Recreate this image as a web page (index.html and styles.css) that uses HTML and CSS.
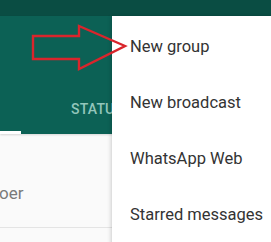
FILE: index.html
```html
<!DOCTYPE html>
<html>
<head>
<meta charset="utf-8">
<link rel="stylesheet" href="styles.css">
</head>
<body>
<div class="screen">
  <div class="statusbar"></div>
  <header class="appbar">
    <nav class="tabs">
      <div class="tab tab-active"></div>
      <div class="tab tab-status">STATUS</div>
    </nav>
  </header>
  <main class="content">
    <div class="row"><span class="row-text">oer</span></div>
    <div class="divider"></div>
  </main>
  <ul class="menu">
    <li class="menu-item">New group</li>
    <li class="menu-item">New broadcast</li>
    <li class="menu-item">WhatsApp Web</li>
    <li class="menu-item">Starred messages</li>
  </ul>
  <svg class="arrow" width="271" height="242" viewBox="0 0 271 242">
    <polygon points="33,36 79,36 79,26 125,46 79,69 79,59 33,59" fill="none" stroke="#d9252c" stroke-width="2.4" stroke-linejoin="miter"/>
  </svg>
</div>
</body>
</html>
```
FILE: styles.css
```css
html, body {
  margin: 0;
  padding: 0;
}
body {
  width: 271px;
  height: 242px;
  overflow: hidden;
  font-family: Roboto, "Noto Sans", sans-serif;
  background: #fafafa;
}
.screen {
  position: relative;
  width: 271px;
  height: 242px;
  overflow: hidden;
}
.statusbar {
  height: 16px;
  background: #0a4d43;
}
.appbar {
  height: 118px;
  background: #0c6155;
  display: flex;
  flex-direction: column;
  justify-content: flex-end;
  box-shadow: 0 1px 2px rgba(0,0,0,0.15);
}
.tabs {
  height: 48px;
  display: flex;
}
.tab {
  box-sizing: border-box;
  display: flex;
  align-items: center;
}
.tab-active {
  width: 21px;
  border-bottom: 3px solid #ffffff;
}
.tab-status {
  padding-left: 50px;
  padding-bottom: 3px;
  font-size: 14px;
  font-weight: 500;
  color: #93c6bb;
  letter-spacing: 0.2px;
}
.content {
  display: flex;
  flex-direction: column;
}
.row {
  height: 93px;
  display: flex;
  align-items: center;
  padding-top: 25px;
  box-sizing: border-box;
}
.row-text {
  font-size: 17px;
  color: #7a7a7a;
  margin-left: -1px;
}
.divider {
  height: 1px;
  background: #e4e4e4;
}
.menu {
  position: absolute;
  left: 112px;
  top: 16px;
  width: 170px;
  height: 240px;
  margin: 0;
  padding: 2px 0 0 0;
  list-style: none;
  background: #ffffff;
  box-shadow: -1px 1px 4px rgba(0,0,0,0.18);
}
.menu-item {
  height: 56px;
  display: flex;
  align-items: center;
  padding-left: 18px;
  font-size: 16.5px;
  color: #333333;
  white-space: nowrap;
}
.arrow {
  position: absolute;
  left: 0;
  top: 0;
  pointer-events: none;
}
```
